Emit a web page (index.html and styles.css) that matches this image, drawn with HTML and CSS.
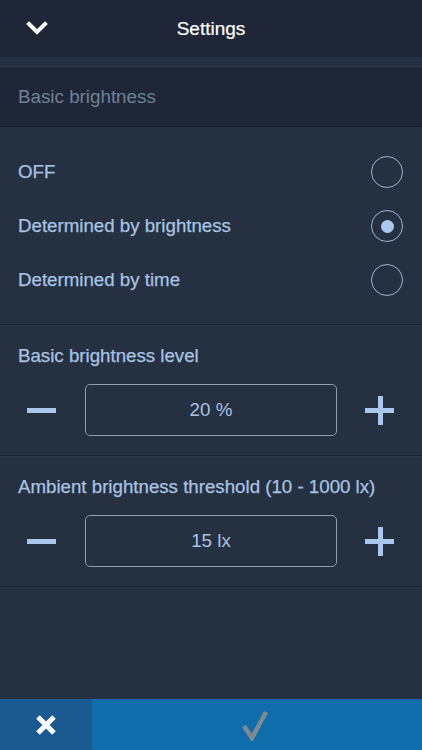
FILE: index.html
```html
<!DOCTYPE html>
<html lang="en">
<head>
    <meta charset="UTF-8">
    <meta name="viewport" content="width=device-width, initial-scale=1.0">
    <title>Settings</title>
    <link rel="stylesheet" href="styles.css">
</head>
<body>
    <div class="screen">
        <header class="topbar">
            <button class="back" aria-label="Back">
                <svg width="22" height="14" viewBox="0 0 22 14">
                    <path d="M3 3 L11 11 L19 3" fill="none" stroke="#fff" stroke-width="4" stroke-linecap="square"/>
                </svg>
            </button>
            <h1>Settings</h1>
        </header>
        <div class="strip"></div>

        <div class="section-title">Basic brightness</div>

        <section class="group options">
            <label class="option">
                <span>OFF</span>
                <span class="radio"></span>
            </label>
            <label class="option">
                <span>Determined by brightness</span>
                <span class="radio checked"></span>
            </label>
            <label class="option">
                <span>Determined by time</span>
                <span class="radio"></span>
            </label>
        </section>

        <section class="group">
            <div class="group-label">Basic brightness level</div>
            <div class="stepper">
                <button class="step minus" aria-label="Decrease"><span></span></button>
                <div class="value">20 %</div>
                <button class="step plus" aria-label="Increase"><span></span></button>
            </div>
        </section>

        <section class="group">
            <div class="group-label">Ambient brightness threshold (10 - 1000 lx)</div>
            <div class="stepper">
                <button class="step minus" aria-label="Decrease"><span></span></button>
                <div class="value">15 lx</div>
                <button class="step plus" aria-label="Increase"><span></span></button>
            </div>
        </section>

        <div class="spacer"></div>

        <footer class="actions">
            <button class="cancel" aria-label="Cancel">
                <svg width="24" height="24" viewBox="0 0 24 24">
                    <path d="M4 4 L20 20 M20 4 L4 20" stroke="#fff" stroke-width="5"/>
                </svg>
            </button>
            <button class="confirm" aria-label="Save">
                <svg width="26" height="32" viewBox="0 0 26 32">
                    <path d="M2 17 L10 29 L24 3" fill="none" stroke="#808a93" stroke-width="4.5" stroke-linejoin="miter"/>
                </svg>
            </button>
        </footer>
    </div>
</body>
</html>
```

FILE: styles.css
```css
* {
    margin: 0;
    padding: 0;
    box-sizing: border-box;
    font-family: 'Liberation Sans', Arial, sans-serif;
}

:root {
    --header-bg: #1e2637;
    --content-bg: #253041;
    --text-blue: #a9c3e3;
    --muted: #6f8299;
    --bar-blue: #0f6dab;
    --bar-dark: #1b5a90;
}

body {
    background-color: var(--content-bg);
    color: var(--text-blue);
}

button {
    background: none;
    border: none;
    cursor: pointer;
}

.screen {
    height: 750px;
    display: flex;
    flex-direction: column;
}

.topbar {
    height: 57px;
    background-color: var(--header-bg);
    display: flex;
    align-items: center;
    justify-content: center;
    position: relative;
}

.topbar h1 {
    color: #fff;
    font-size: 19px;
    font-weight: 400;
    -webkit-text-stroke: 0.2px #fff;
}

.back {
    position: absolute;
    left: 26px;
    top: 21px;
    display: flex;
}

.strip {
    height: 10px;
    background-color: #243041;
    border-bottom: 1px solid #323c4c;
}

.section-title {
    height: 60px;
    background-color: var(--header-bg);
    border-bottom: 1px solid #141a24;
    display: flex;
    align-items: center;
    padding-left: 18px;
    font-size: 18.8px;
    color: var(--muted);
}

.group {
    border-bottom: 1px solid #19202b;
    box-shadow: 0 1px 0 #2d3848;
    padding: 20px 0 19px;
}

.options {
    padding: 18px 0 17px;
}

.option {
    height: 54px;
    display: flex;
    align-items: center;
    justify-content: space-between;
    padding: 0 19px 0 18px;
    font-size: 18.7px;
    -webkit-text-stroke: 0.25px var(--text-blue);
    cursor: pointer;
}

.radio {
    width: 32px;
    height: 32px;
    border: 1.5px solid #9fb6d3;
    border-radius: 50%;
    display: flex;
    align-items: center;
    justify-content: center;
}

.radio.checked::after {
    content: "";
    width: 13px;
    height: 13px;
    border-radius: 50%;
    background-color: #abc9ee;
}

.group-label {
    height: 22px;
    line-height: 22px;
    padding-left: 18px;
    font-size: 18.7px;
    -webkit-text-stroke: 0.25px var(--text-blue);
    margin-bottom: 17px;
    white-space: nowrap;
}

.stepper {
    display: flex;
    align-items: center;
    gap: 19px;
    padding: 0 18px;
}

.step {
    width: 48px;
    height: 52px;
    display: flex;
    align-items: center;
    justify-content: center;
    position: relative;
}

.step span {
    display: block;
    width: 29px;
    height: 5px;
    background-color: #a9c6ec;
}

.minus span {
    margin-left: -1px;
}

.plus span::after {
    content: "";
    position: absolute;
    left: 50%;
    top: 50%;
    width: 5px;
    height: 29px;
    margin: -14.5px 0 0 -2.5px;
    background-color: #a9c6ec;
}

.plus span {
    margin-right: 2px;
}

.value {
    flex: 1;
    height: 52px;
    border: 1.5px solid #8d9db2;
    border-radius: 5px;
    display: flex;
    align-items: center;
    justify-content: center;
    font-size: 18.8px;
}

.spacer {
    flex: 1;
}

.actions {
    height: 51px;
    display: flex;
    background-color: var(--bar-blue);
}

.cancel {
    width: 92px;
    background-color: var(--bar-dark);
    display: flex;
    align-items: center;
    justify-content: center;
}

.confirm {
    flex: 1;
    display: flex;
    align-items: center;
    justify-content: center;
    padding-right: 4px;
}
```
